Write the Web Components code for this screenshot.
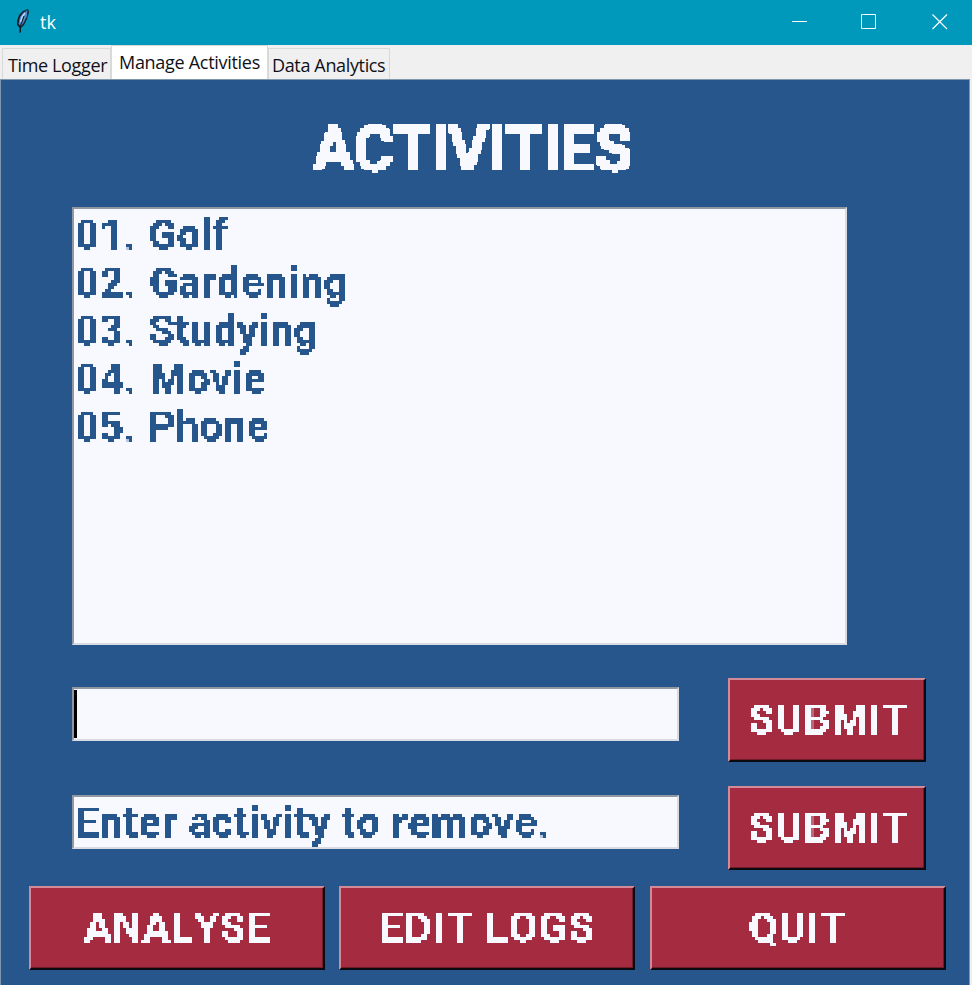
<!DOCTYPE html>
<html lang="en"><head><meta charset="utf-8"><title>tk</title>
<style>html,body{margin:0;height:100%;overflow:hidden;background:#f0f0f0}</style></head>
<body>
<tk-window></tk-window>
<script>
/* Text spaced so that its advance equals the "span" attribute; "pixel" renders it on a coarse grid. */
class FitText extends HTMLElement{
  connectedCallback(){
    const cell=+this.getAttribute('pixel')||0, r=(cell-1)/2;
    this.attachShadow({mode:'open'}).innerHTML=`<style>
      :host{display:block;white-space:pre;width:max-content;position:relative}
      span{display:block;width:max-content;font-kerning:none}
      .p{filter:url(#grid)} svg{position:absolute;width:0;height:0}
    </style>${cell?`<svg><filter id="grid" filterUnits="userSpaceOnUse" x="0" y="0" width="700" height="100" color-interpolation-filters="sRGB">
      <feFlood x="${r}" y="${r}" width="1" height="1" result="dot"/>
      <feOffset in="dot" x="0" y="0" width="${cell}" height="${cell}" result="unit"/>
      <feTile in="unit" result="tiles"/>
      <feComposite in="SourceGraphic" in2="tiles" operator="in"/>
      <feComponentTransfer><feFuncA type="linear" slope="200" intercept="-75"/></feComponentTransfer>
      <feMorphology operator="dilate" radius="${r}"/>
    </filter></svg>`:''}<span class="${cell?'p':''}"><slot></slot></span>`;
    const s=this.shadowRoot.querySelector('span'), n=this.textContent.length;
    const gap=+this.getAttribute('gap')||0, w=s.offsetWidth;
    s.style.wordSpacing=gap+'px';
    s.style.letterSpacing=((+this.getAttribute('span')-w-gap)/n)+'px';
  }
}
class TitleBar extends HTMLElement{
  constructor(){super();this.attachShadow({mode:'open'}).innerHTML=`<style>
    :host{display:flex;height:45px;box-sizing:border-box;background:#0099bc;color:#fff;align-items:center;padding:0 24px 0 15px;font:18px/24px "Open Sans",sans-serif}
    .name{margin:-1px 0 0 9px;flex:1} .feather{width:16px;height:26px;margin-top:-3px}
    .ctl{display:flex;gap:53px;margin-top:-2px;fill:none;stroke:#fff}
    </style>
    <svg class="feather" viewBox="0 0 16 26"><path d="M5 24V20L2 17V13L4 7L8 3L13 1L14 4L12 11L9 17L6 20V24Z" fill="#14202c"/><path d="M3.5 16L5 9L8 5L12.5 2L12 8L8.5 15L6 18Z" fill="#4a85cb"/><path d="M5.5 14L7 9L10 5" stroke="#c4dcf4" stroke-width="1.4" fill="none"/><path d="M9 8L7 14L5 19V25" stroke="#101820" fill="none"/></svg>
    <span class="name"><slot></slot></span>
    <div class="ctl"><svg width="16" height="16"><path d="M0 7.5H15"/></svg><svg width="16" height="16"><path d="M.5.5H14.5V14.5H.5Z"/></svg><svg width="16" height="16" style="margin-left:2px"><path d="M.5.5L15 15M15 .5L.5 15" stroke-width="1.2"/></svg></div>`}
}
class NoteTab extends HTMLElement{
  constructor(){super();this.attachShadow({mode:'open'}).innerHTML=`<style>
    :host{display:block;box-sizing:border-box;height:31px;border:1px solid #d9d9d9;border-bottom:0;padding:4px 0 0 5px;background:#f0f0f0;font:18px/24px "Open Sans",sans-serif;color:#101018}
    :host([active]){height:34px;background:#fff;padding:4px 0 0 7px}
    </style><slot></slot>`}
}
class TkButton extends HTMLElement{
  constructor(){super();this.attachShadow({mode:'open'}).innerHTML=`<style>
    :host{display:flex;box-sizing:border-box;height:84px;justify-content:center;background:#a52c40;color:#f8f8ff;border:2px solid;border-color:#d38a98 #090910 #090910 #d38a98;box-shadow:inset -1px -1px #6f1d2b;padding-top:16px}
    </style><slot></slot>`}
}
class TkField extends HTMLElement{
  constructor(){super();this.attachShadow({mode:'open'}).innerHTML=`<style>
    :host{display:block;box-sizing:border-box;background:#f8f8ff;border:2px solid;border-color:#9298a3 #d8dbe3 #d8dbe3 #9298a3;padding:2px 0 0 1px;color:#26568b}
    :host([focused])::before{content:"";display:block;width:3px;height:48px;background:#000;margin:-1px 0 0 -1px}
    </style><slot></slot>`}
}
class TkWindow extends HTMLElement{
  constructor(){super();this.attachShadow({mode:'open'}).innerHTML=`<style>
    :host{display:flex;flex-direction:column;width:972px;height:985px;background:#f0f0f0}
    .tabs{display:flex;align-items:flex-end;height:34px;padding-left:2px}
    main{display:flex;flex-direction:column;flex:1;box-sizing:border-box;width:970px;border:1px solid #8096b0;border-bottom:0;background:#26568b;font:bold 42px/48px Roboto,"Liberation Sans",sans-serif;overflow:hidden}
    h1{font-size:68px;font-weight:500;line-height:80px;margin:33px 0 0 312px;height:94px;color:#f8f8ff}
    h1 fit-text{transform:scale(.9);transform-origin:0 0}
    .list{margin-left:71px;width:775px;height:438px}
    .row{display:grid;grid-template-columns:607px 198px;column-gap:49px;margin-left:71px;align-items:center;height:84px}
    .row tk-field{height:54px;margin-top:-12px}
    .row tk-button{padding-left:3px}
    .one{margin-top:33px}.two{margin-top:24px}
    .foot{display:grid;grid-template-columns:296px 296px 296px;column-gap:14.4px;margin:16px 0 0 28px}
    </style>
    <title-bar>tk</title-bar>
    <div class="tabs">
      <note-tab style="width:109px"><fit-text span="99">Time Logger</fit-text></note-tab>
      <note-tab active style="width:157px"><fit-text span="141">Manage Activities</fit-text></note-tab>
      <note-tab style="width:122px;padding-left:3px"><fit-text span="113">Data Analytics</fit-text></note-tab>
    </div>
    <main>
      <h1><fit-text span="355" pixel="5">ACTIVITIES</fit-text></h1>
      <tk-field class="list">
        <fit-text span="152" gap="2" pixel="3">01. Golf</fit-text>
        <fit-text span="273" gap="2" pixel="3">02. Gardening</fit-text>
        <fit-text span="243" gap="2" pixel="3">03. Studying</fit-text>
        <fit-text span="191" gap="2" pixel="3">04. Movie</fit-text>
        <fit-text span="194" gap="2" pixel="3">05. Phone</fit-text>
      </tk-field>
      <div class="row one"><tk-field focused></tk-field><tk-button><fit-text span="160" pixel="3">SUBMIT</fit-text></tk-button></div>
      <div class="row two"><tk-field><fit-text span="475" pixel="3">Enter activity to remove.</fit-text></tk-field><tk-button><fit-text span="160" pixel="3">SUBMIT</fit-text></tk-button></div>
      <div class="foot"><tk-button><fit-text span="186" pixel="3">ANALYSE</fit-text></tk-button><tk-button><fit-text span="216" pixel="3">EDIT LOGS</fit-text></tk-button><tk-button><fit-text span="98" pixel="3">QUIT</fit-text></tk-button></div>
    </main>`}
}
customElements.define('fit-text',FitText);
customElements.define('title-bar',TitleBar);
customElements.define('note-tab',NoteTab);
customElements.define('tk-button',TkButton);
customElements.define('tk-field',TkField);
customElements.define('tk-window',TkWindow);
</script>
</body></html>
